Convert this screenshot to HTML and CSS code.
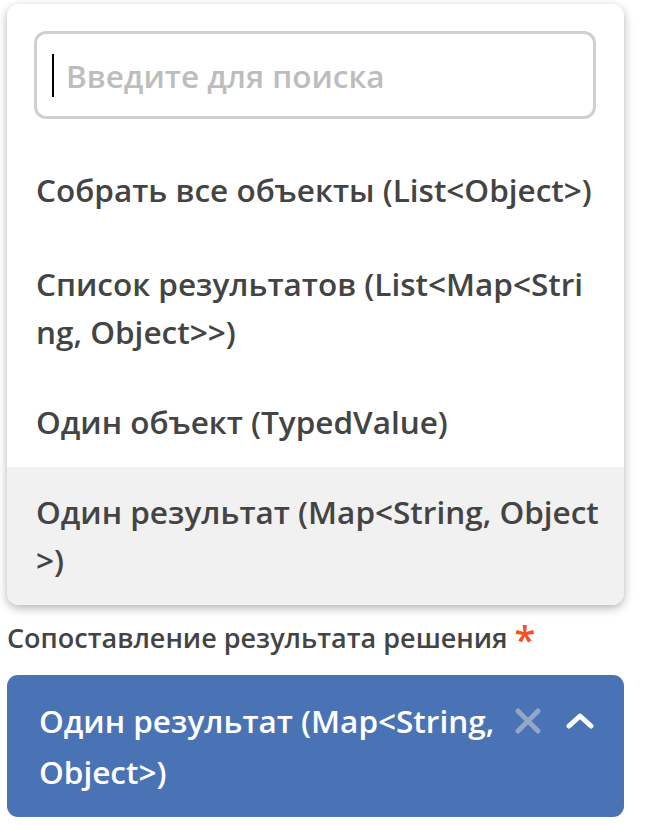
FILE: index.html
```html
<!DOCTYPE html>
<html lang="ru">
<head>
<meta charset="utf-8">
<link rel="stylesheet" href="styles.css">
</head>
<body>
<div class="page">
  <div class="dropdown">
    <div class="search-wrap">
      <div class="search">
        <span class="caret"></span>
        <span class="placeholder">Введите для поиска</span>
      </div>
    </div>
    <ul class="options">
      <li class="option">Собрать все объекты (List&lt;Object&gt;)</li>
      <li class="option">Список результатов (List&lt;Map&lt;String, Object&gt;&gt;)</li>
      <li class="option">Один объект (TypedValue)</li>
      <li class="option active">Один результат (Map&lt;String, Object&gt;)</li>
    </ul>
  </div>
  <div class="label">Сопоставление результата решения <span class="req">*</span></div>
  <div class="select">
    <div class="value">Один результат (Map&lt;String, Object&gt;)</div>
    <div class="icons">
      <svg class="clear" width="28" height="28" viewBox="0 0 28 28"><path d="M4 4L24 24M24 4L4 24" stroke="#94a6c9" stroke-width="5" stroke-linecap="round"/></svg>
      <svg class="chev" width="28" height="18" viewBox="0 0 28 18"><path d="M3 14L14 4L25 14" fill="none" stroke="#fff" stroke-width="5" stroke-linecap="round" stroke-linejoin="round"/></svg>
    </div>
  </div>
</div>
</body>
</html>
```
FILE: styles.css
```css
* { box-sizing: border-box; }
html, body { margin: 0; padding: 0; background: #fff; }
body { font-family: "Open Sans", "Noto Sans", sans-serif; }
.page { padding: 4px 31px 0 7px; display: flex; flex-direction: column; }
.dropdown {
  background: #fff;
  border-radius: 12px;
  box-shadow: 0 3px 10px rgba(0,0,0,0.3);
  overflow: hidden;
}
.search-wrap { padding: 27px 28px 30px 27px; }
.search {
  height: 88px;
  border: 3px solid #d0d0d0;
  border-radius: 12px;
  display: flex;
  align-items: center;
  padding-left: 15px;
}
.caret { width: 2px; height: 43px; background: #000; }
.placeholder {
  margin-left: 12px;
  font-size: 31.5px;
  font-weight: 600;
  color: #bdbdbd;
}
.options { list-style: none; margin: 0; padding: 0; }
.option {
  padding: 21px 26px 21px 29px;
  font-size: 31.5px;
  line-height: 48px;
  font-weight: 600;
  color: #444;
  word-break: break-all;
}
.option:first-child { padding-top: 17px; padding-bottom: 25px; }
.option.active { background: #f1f1f1; padding-right: 20px; }
.label {
  margin-top: 16px;
  font-size: 27px;
  line-height: 34px;
  font-weight: 600;
  color: #444;
}
.req { color: #f4511e; font-size: 38px; line-height: 20px; vertical-align: -6px; }
.select {
  margin-top: 20px;
  background: #4a73b6;
  border-radius: 11px;
  padding: 20px 30px 20px 32px;
  display: flex;
  align-items: flex-start;
}
.value {
  flex: 1;
  font-size: 31.5px;
  line-height: 51px;
  font-weight: 600;
  color: #fff;
}
.icons { display: flex; align-items: center; gap: 24px; height: 51px; }
```
